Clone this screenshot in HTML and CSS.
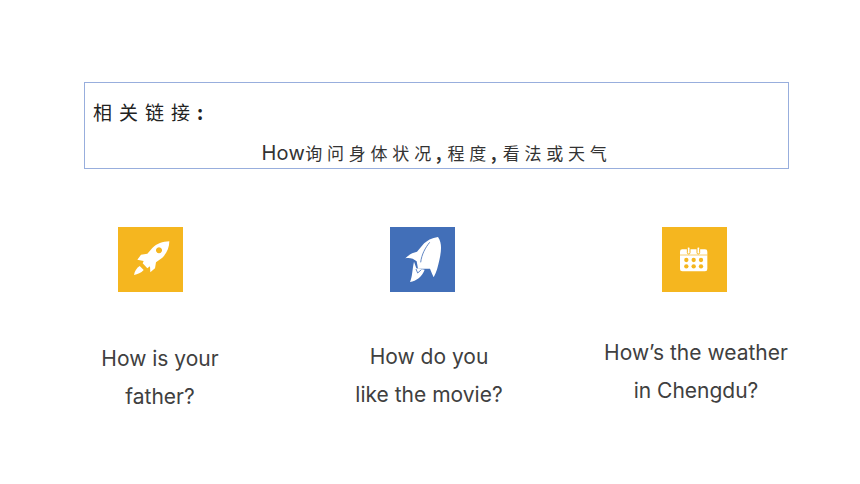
FILE: index.html
```html
<!DOCTYPE html>
<html lang="zh">
<head>
<meta charset="utf-8">
<title>相关链接</title>
<link rel="stylesheet" href="styles.css">
</head>
<body>
<main class="slide">
  <section class="links">
    <h1 class="links-title">相关链接<span class="colon">:</span></h1>
    <p class="links-text"><span class="latin">How</span>询问身体状况<span class="comma">,</span>程度<span class="comma">,</span>看法或天气</p>
  </section>
  <section class="cards">
    <div class="card card-one">
      <div class="tile tile-yellow">
        <svg class="icon" viewBox="24 22 195 195" aria-hidden="true">
          <path class="ink" fill-rule="evenodd" d="M178 65C158 66 140 72 127 85L112 102 93 105 82 120 101 124 98 131 112 146 120 140 121 158 135 146 138 128 157 114C170 101 178 84 178 65ZM147 83a9 9 0 1 0 .01 0Z"/>
          <path class="ink" d="M89 139 101 151C93 160 83 164 72 166 74 155 79 146 89 139Z"/>
        </svg>
      </div>
      <p class="caption">How is your<br>father?</p>
    </div>
    <div class="card card-two">
      <div class="tile tile-blue">
        <svg class="icon" viewBox="24 22 195 195" aria-hidden="true">
          <path class="ink" d="M168 52C150 55 134 62 122 76L105 96C92 99 80 105 70 116 82 113 94 116 104 125L108 147 144 147C148 158 152 166 155 173 163 160 168 140 172 122 177 98 182 72 168 52Z"/>
          <path class="fold" d="M143 68C130 84 119 104 116 128"/>
          <path class="ink" d="M96 126 103 146 128 150C120 171 103 184 84 187 91 172 91 148 96 126Z"/>
          <path class="fold" d="M102 148 107 160 118 150"/>
        </svg>
      </div>
      <p class="caption">How do you<br>like the movie?</p>
    </div>
    <div class="card card-three">
      <div class="tile tile-yellow">
        <svg class="icon" viewBox="24 22 195 195" aria-hidden="true">
          <rect class="ink" x="78" y="89" width="82" height="66" rx="7"/>
          <path class="line" d="M78 106H160"/>
          <rect class="ring" x="100" y="82" width="8" height="21" rx="4"/>
          <rect class="ring" x="129" y="82" width="8" height="21" rx="4"/>
          <g class="dots">
            <circle cx="97" cy="121" r="6.5"/><circle cx="119" cy="121" r="6.5"/><circle cx="141" cy="121" r="6.5"/>
            <circle cx="97" cy="140" r="6.5"/><circle cx="119" cy="140" r="6.5"/><circle cx="141" cy="140" r="6.5"/>
          </g>
        </svg>
      </div>
      <p class="caption">How’s the weather<br>in Chengdu?</p>
    </div>
  </section>
</main>
</body>
</html>
```
FILE: styles.css
```css
* { box-sizing: border-box; }
html, body { margin: 0; padding: 0; background: #fff; }
body { width: 860px; height: 484px; overflow: hidden; font-family: "Inter", "Noto Sans CJK SC", sans-serif; color: #404040; }
.slide { padding: 82px 71px 0 84px; }

.links { height: 87px; width: 705px; border: 1px solid #98aedd; display: flex; flex-direction: column; padding: 0 8px; }
.links-title { margin: 16px 0 0; font: 400 19px/26px "Noto Sans CJK SC", sans-serif; letter-spacing: 7px; color: #222; }
.colon { font-weight: 700; letter-spacing: 0; }
.links-text { margin: 16px 0 0; font: 400 17px/24px "Noto Sans CJK SC", sans-serif; letter-spacing: 4.8px; text-align: center; color: #333; }
.latin { font-family: "Inter", sans-serif; font-size: 20px; letter-spacing: 0.3px; }
.comma { font-weight: 700; letter-spacing: 0; margin-right: 6px; }

.cards { margin-top: 58px; margin-left: -4px; display: grid; grid-template-columns: repeat(3, 272px); }
.card { display: flex; flex-direction: column; }
.tile { width: 65px; height: 65px; margin-left: 38px; }
.tile-yellow { background: #f5b61f; }
.tile-blue { background: #426fb8; }
.icon { display: block; width: 65px; height: 65px; }
.ink { fill: #fff; }
.fold { fill: none; stroke: #426fb8; stroke-width: 2.5; }
.line { fill: none; stroke: #f5b61f; stroke-width: 2; }
.ring { fill: #fff; stroke: #f5b61f; stroke-width: 3; }
.dots { fill: #f5b61f; }

.caption { margin: 0; font-size: 21px; line-height: 38px; text-align: center; white-space: nowrap; color: #404040; width: 200px; }
.card-one .caption { margin-top: 48px; margin-left: -20px; }
.card-two .caption { margin-top: 46px; margin-left: -23px; }
.card-three .caption { margin-top: 42px; margin-left: -28px; }
```
